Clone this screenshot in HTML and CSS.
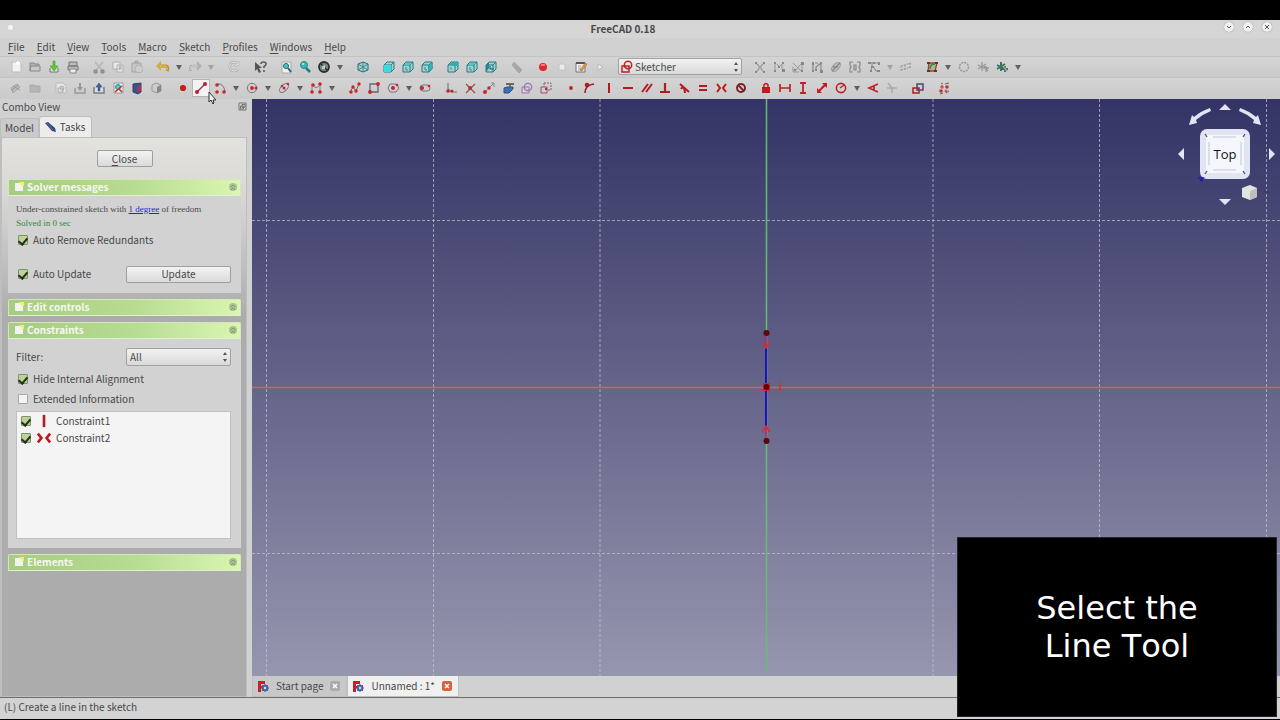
FILE: index.html
```html
<!DOCTYPE html>
<html lang="en">
<head>
<meta charset="utf-8">
<title>FreeCAD 0.18</title>
<link rel="stylesheet" href="styles.css">
</head>
<body>
<svg class="defs" aria-hidden="true">
  <defs>
    <symbol id="drop" viewBox="0 0 10 16"><path d="M2 6h6L5 11z" fill="#606060"/></symbol>
    <symbol id="new" viewBox="0 0 16 16"><path d="M4 3h7l2 2v8H4z" fill="#f2f2f2" stroke="#c0c0c0"/><path d="M10 2v4M8 4h4" stroke="#fff" stroke-width="2"/></symbol>
    <symbol id="open" viewBox="0 0 16 16"><path d="M3 12V4h4l1 1h4v2" fill="#b2b2b2" stroke="#888"/><path d="M3 12l1-5h9v5z" fill="#c8c8c8" stroke="#888"/></symbol>
    <symbol id="save" viewBox="0 0 16 16"><path d="M4 9v4h8V9" fill="#ddd" stroke="#777"/><path d="M7 2h2v5h3l-4 5-4-5h3z" fill="#62c832" stroke="#419d1c" stroke-width=".6"/></symbol>
    <symbol id="print" viewBox="0 0 16 16"><path d="M4 3h8v4H4zM3 7h10v4H3z" fill="#bbb" stroke="#777"/><path d="M5 10h6v4H5z" fill="#eee" stroke="#888"/></symbol>
    <symbol id="cut" viewBox="0 0 16 16"><path d="M4 3l7 8M12 3l-7 8" stroke="#b5b5b5" stroke-width="1.400"/><path d="M3 11h3v3H3zM10 11h3v3h-3z" fill="#999" stroke="#888"/></symbol>
    <symbol id="copy" viewBox="0 0 16 16"><path d="M3 3h7v7H3zM7 6h6v7H7z" fill="#e9e9e9" stroke="#b0b0b0"/><path d="M9 8h3M9 10h3" stroke="#aaa"/></symbol>
    <symbol id="paste" viewBox="0 0 16 16"><path d="M3 4h9v9H3zM6 2h3v2H6z" fill="#c5c5c5" stroke="#a5a5a5"/><path d="M7 7h6v6H7z" fill="#eee" stroke="#aaa"/><path d="M8 9h4M8 11h4" stroke="#aaa"/></symbol>
    <symbol id="undo" viewBox="0 0 16 16"><path d="M5 7h6q3 1 1 5" fill="none" stroke="#b99324" stroke-width="3"/><path d="M6 2v10L1 7z" fill="#d5ac38"/><path d="M5 7h6q2 1 1 4" fill="none" stroke="#ecc861"/></symbol>
    <symbol id="redo" viewBox="0 0 16 16"><path d="M11 7H5q-3 1-1 5" fill="none" stroke="#aaa" stroke-width="2.400"/><path d="M10 2v10l5-5z" fill="#b0b0b0"/><path d="M11 7H5q-2 1-1 4" fill="none" stroke="#ddd"/></symbol>
    <symbol id="refresh" viewBox="0 0 16 16"><path d="M12 10a4.500 4.500 0 1 1-1-6" fill="none" stroke="#aaa" stroke-width="2.500"/><path d="M12 10a4.500 4.500 0 1 1-1-6" fill="none" stroke="#eee"/><path d="M13 2v5H8z" fill="#ddd" stroke="#aaa" stroke-width=".5"/></symbol>
    <symbol id="whats" viewBox="0 0 16 16"><path d="M3 3v9l2-2 2 4 2-1-2-4h3z" fill="#555"/><path d="M9 5q0-2 2.500-2T14 5q0 1.500-2 2.500V9M12 11v2" fill="none" stroke="#5b5e68" stroke-width="1.700"/></symbol>
    <symbol id="fit" viewBox="0 0 16 16"><path d="M4 3h9v11H4z" fill="#f0f0f0" stroke="#aaa"/><circle cx="8" cy="7" r="2.500" fill="#4cc6c4" stroke="#1a6d70"/><path d="M10 9l3 4" stroke="#1a6d70" stroke-width="2"/></symbol>
    <symbol id="fitsel" viewBox="0 0 16 16"><circle cx="7" cy="6" r="3.500" fill="#35b9b6" stroke="#27888a"/><path d="M9 9l4 4" stroke="#198181" stroke-width="2.500"/><circle cx="6" cy="5" r="1" fill="#c6eeee"/></symbol>
    <symbol id="style" viewBox="0 0 16 16"><circle cx="8" cy="8" r="5" fill="#7a8585" stroke="#2e2e31" stroke-width="1.800"/><path d="M4 4l8 8" stroke="#303033" stroke-width="1.500"/><path d="M6 7l3-1v4H6z" fill="#bccccc"/></symbol>
    <symbol id="axo" viewBox="0 0 16 16"><path d="M8 3l5 2v6l-5 2-5-2V5z" fill="#a5cfcf" stroke="#256f74"/><path d="M8 3v10M3 5l10 6M13 5L3 11" fill="none" stroke="#398489" stroke-width=".9"/></symbol>
    <symbol id="box" viewBox="0 0 16 16"><path d="M3 6l3-3h7v7l-3 3H3z" fill="#a9cfcf" stroke="#267b80"/><path d="M3 6h7v7M10 6l3-3" fill="none" stroke="#267b80"/></symbol>
    <symbol id="v1" viewBox="0 0 16 16"><use href="#box"/><path d="M3 6h7v7H3z" fill="#35dede"/></symbol>
    <symbol id="v2" viewBox="0 0 16 16"><use href="#box"/><path d="M5 5l1-1h6l-2 2H5z" fill="#29d5d5"/><path d="M6 8v3h2" fill="none" stroke="#358d91"/></symbol>
    <symbol id="v3" viewBox="0 0 16 16"><use href="#box"/><path d="M10 6l3-3v7l-3 3z" fill="#25c5c5" stroke="#267b80" stroke-width=".5"/><path d="M6 8v3h2" fill="none" stroke="#358d91"/></symbol>
    <symbol id="v4" viewBox="0 0 16 16"><use href="#box"/><path d="M5 5l2-2h6v5l-3-2H5z" fill="#20b2b5"/><path d="M6 8v3" stroke="#358d91"/></symbol>
    <symbol id="v6" viewBox="0 0 16 16"><use href="#box"/><path d="M3 6l3-3v6l-3 4z" fill="#18898e"/><path d="M7 7v3h4" fill="none" stroke="#135f65"/></symbol>
    <symbol id="measure" viewBox="0 0 16 16"><path d="M5 3l8 8-3 3-7-8z" fill="#a8a8a8" stroke="#999" stroke-width=".6"/></symbol>
    <symbol id="rec" viewBox="0 0 16 16"><circle cx="8" cy="8" r="4" fill="#e52626"/><ellipse cx="8" cy="6" rx="2.500" ry="1" fill="#f58a8a"/></symbol>
    <symbol id="stop" viewBox="0 0 16 16"><path d="M5 5h6v6H5z" fill="#ececec" stroke="#c2c2c2"/></symbol>
    <symbol id="edit" viewBox="0 0 16 16"><path d="M3 4h9v9H3z" fill="#eee" stroke="#777"/><path d="M3 4h9" stroke="#555" stroke-width="2"/><path d="M5 7h3M5 9h3M5 11h5" stroke="#aaa"/><path d="M7 11l5-7 2 1-5 7z" fill="#e69b38" stroke="#89643b" stroke-width=".5"/></symbol>
    <symbol id="play" viewBox="0 0 16 16"><path d="M6 5l5 3-5 3z" fill="#eee" stroke="#bbb"/></symbol>
    <symbol id="sketcher" viewBox="0 0 16 16"><path d="M3 7h7v6H3z" fill="none" stroke="#c32128" stroke-width="1.500"/><circle cx="9" cy="6" r="3.700" fill="none" stroke="#c32128" stroke-width="1.500"/></symbol>
    <symbol id="g1" viewBox="0 0 16 16"><path d="M4 4l3 3v3l-3 3M12 4L9 7v3l3 3M7 8h2" fill="none" stroke="#999" stroke-width="1.200"/><path d="M3 3h2v2H3zM11 3h2v2h-2zM3 12h2v2H3zM11 12h2v2h-2z" fill="#888"/></symbol>
    <symbol id="g2" viewBox="0 0 16 16"><path d="M4 4v9M6 5l2 3 3-3v5" fill="none" stroke="#999"/><path d="M3 3h2v2H3zM7 7h2v2H7zM3 11h2v2H3zM11 10h3v3h-3zM11 3h2v2h-2z" fill="#888"/></symbol>
    <symbol id="g3" viewBox="0 0 16 16"><path d="M3 4l8 8M5 12l7-8v8M3 8v5h6" fill="none" stroke="#999"/><path d="M11 3h3v3h-3zM4 10h2v2H4zM11 11h2v2h-2z" fill="#888"/></symbol>
    <symbol id="g4" viewBox="0 0 16 16"><path d="M4 4v9M12 4v9M7 12V8l5-4M6 4h3" fill="none" stroke="#888" stroke-width="1.200"/><path d="M3 3h2v3H3zM11 3h2v2h-2zM3 11h2v2H3zM6 10h2v2H6zM11 11h3v3h-3z" fill="#888"/></symbol>
    <symbol id="g5" viewBox="0 0 16 16"><ellipse cx="8" cy="8" rx="5.500" ry="3" transform="rotate(-45 8 8)" fill="#c0c0c0" stroke="#999"/><path d="M4 12l8-8M5 8h5" stroke="#888" stroke-width="1.300"/></symbol>
    <symbol id="g6" viewBox="0 0 16 16"><path d="M6 3H3v3l1 2-1 2v3h3M10 3h3v3l-1 2 1 2v3h-3M7 6h2v5H7z" fill="none" stroke="#888" stroke-width="1.200"/></symbol>
    <symbol id="g7" viewBox="0 0 16 16"><path d="M3 4h10M6 4v4l-1 3M7 7l3 5h3" fill="none" stroke="#888"/><path d="M2 3h3v2H2zM7 3h2v2H7zM12 3h2v3h-2zM5 7h3v2H5zM4 11h2v2H4zM11 11h3v2h-3z" fill="#888"/></symbol>
    <symbol id="g8" viewBox="0 0 16 16"><path d="M3 7l10-3M3 11l10-3M3 7v5M7 6v5M12 4v5" stroke="#999" stroke-dasharray="2 1"/></symbol>
    <symbol id="bs" viewBox="0 0 16 16"><path d="M4 12l1-8h8l-2 8z" fill="#a8b894" stroke="#a63d26" stroke-width="1.300"/><path d="M6 10q0-5 5-5" stroke="#3b853b" fill="none" stroke-width="1.500"/><path d="M3 11h3v2H3zM3 3h3v2H3zM11 3h3v2h-3zM10 11h3v2h-3z" fill="#782b22"/></symbol>
    <symbol id="ring" viewBox="0 0 16 16"><circle cx="8" cy="8" r="4.500" fill="none" stroke="#999" stroke-width="1.500" stroke-dasharray="2 1"/></symbol>
    <symbol id="gearg" viewBox="0 0 16 16"><path d="M7 3v9M3 6l8 4M3 10l8-5M11 7v6M8 9h6M9 7l4 5" stroke="#999" stroke-width="1.300"/></symbol>
    <symbol id="gearc" viewBox="0 0 16 16"><path d="M3 6l8 4M11 7v6M8 10h6" stroke="#3c61a8" stroke-width="1.800"/><path d="M7 3v9M3 10l8-5" stroke="#367a45" stroke-width="2"/><path d="M10 8l3 4" stroke="#b7a944" stroke-width="1.500"/></symbol>
    <symbol id="leave" viewBox="0 0 16 16"><path d="M3 8l6-4 3 3-7 6z" fill="#bbb" stroke="#a5a5a5"/><path d="M5 6l7 4M4 10l6-5" stroke="#999"/></symbol>
    <symbol id="vsk" viewBox="0 0 16 16"><path d="M3 12V5h4l1 1h5v6z" fill="#b5b5b5" stroke="#aaa"/></symbol>
    <symbol id="nsk" viewBox="0 0 16 16"><path d="M3 3h7l3 3v7H3z" fill="#e6e6e6" stroke="#bbb"/><path d="M5 8h5v4H5z" fill="none" stroke="#aaa"/><circle cx="9" cy="8" r="2" fill="none" stroke="#aaa"/></symbol>
    <symbol id="down" viewBox="0 0 16 16"><path d="M4 9H3v4h10V9h-1" fill="none" stroke="#999" stroke-width="1.500"/><path d="M7 3h2v4h2l-3 4-3-4h2z" fill="#999"/></symbol>
    <symbol id="up" viewBox="0 0 16 16"><path d="M4 8H3v5h10V8h-1" fill="#ddd" stroke="#797b88" stroke-width="1.500"/><path d="M7 11h2V7h2L8 3 5 7h2z" fill="#3e63a0" stroke="#304b7c" stroke-width=".5"/></symbol>
    <symbol id="map" viewBox="0 0 16 16"><path d="M4 3h9v10H4z" fill="#eee" stroke="#999"/><circle cx="8" cy="7" r="2.500" fill="#58c9cd" stroke="#268f94"/><path d="M5 12l7-6M9 9l3 3" stroke="#c2312b" stroke-width="1.500"/></symbol>
    <symbol id="cubeb" viewBox="0 0 16 16"><path d="M4 4l8-1v9l-3 2-5-2z" fill="#335395" stroke="#3a3d65"/><path d="M8 6l4-1v6l-4 1z" fill="#a5374a"/></symbol>
    <symbol id="cubeg" viewBox="0 0 16 16"><path d="M4 5l4-2 5 2v6l-4 2-5-2z" fill="#ccc" stroke="#999"/><path d="M9 7l4-2v6l-4 2z" fill="#888"/></symbol>
    <symbol id="dot" viewBox="0 0 16 16"><circle cx="9" cy="8" r="3.100" fill="#c81c1c"/></symbol>
    <symbol id="line" viewBox="0 0 16 16"><path d="M4 12l8-8" stroke="#993c4a" stroke-width="1.500"/><circle cx="4" cy="12" r="2" fill="#c51d28"/><circle cx="12" cy="4" r="2" fill="#c51d28"/></symbol>
    <symbol id="arc" viewBox="0 0 16 16"><path d="M5 4q7-1 8 8" fill="none" stroke="#777083"/><circle cx="5" cy="5" r="1.800" fill="#c72626"/><circle cx="5" cy="12" r="1.800" fill="#c72626"/><circle cx="12" cy="12" r="1.800" fill="#c72626"/></symbol>
    <symbol id="circle" viewBox="0 0 16 16"><circle cx="8" cy="8" r="4.700" fill="none" stroke="#777287"/><circle cx="8" cy="8" r="1.900" fill="#c72626"/><circle cx="12" cy="8" r="1.500" fill="#c72626"/></symbol>
    <symbol id="conic" viewBox="0 0 16 16"><ellipse cx="8" cy="8" rx="5.500" ry="3" transform="rotate(-45 8 8)" fill="none" stroke="#77738b"/><circle cx="8" cy="8" r="1.500" fill="#c72626"/><circle cx="12" cy="4" r="1.200" fill="#c72626"/><circle cx="6" cy="6" r="1.200" fill="#c72626"/></symbol>
    <symbol id="spline" viewBox="0 0 16 16"><path d="M4 12V5q4 5 8 0v7" fill="none" stroke="#8c7a89"/><circle cx="4" cy="12" r="1.800" fill="#c72626"/><circle cx="5" cy="5" r="1.800" fill="#c72626"/><circle cx="12" cy="4" r="1.800" fill="#c72626"/><circle cx="12" cy="12" r="1.800" fill="#c72626"/></symbol>
    <symbol id="poly" viewBox="0 0 16 16"><path d="M3 12l3-5 3 4 3-7" fill="none" stroke="#8c5a69"/><circle cx="4" cy="12" r="1.700" fill="#c72626"/><circle cx="6" cy="7" r="1.700" fill="#c72626"/><circle cx="9" cy="11" r="1.700" fill="#c72626"/><circle cx="12" cy="4" r="1.700" fill="#c72626"/></symbol>
    <symbol id="rect" viewBox="0 0 16 16"><path d="M4 4h8v8H4z" fill="none" stroke="#667" stroke-width="1.300"/><circle cx="12" cy="4" r="1.900" fill="#c72626"/><circle cx="4" cy="12" r="1.900" fill="#c72626"/></symbol>
    <symbol id="hex" viewBox="0 0 16 16"><path d="M5 4h6l3 4-3 4H5L3 8z" fill="none" stroke="#777287"/><circle cx="8" cy="8" r="2" fill="#c72626"/><circle cx="12" cy="5" r="1.300" fill="#c72626"/></symbol>
    <symbol id="slot" viewBox="0 0 16 16"><rect x="3" y="5" width="10" height="6" rx="3" fill="none" stroke="#777287"/><circle cx="5" cy="8" r="2" fill="#c72626"/><circle cx="12" cy="6" r="1.300" fill="#c72626"/></symbol>
    <symbol id="fillet" viewBox="0 0 16 16"><path d="M5 3v6l3 3h6" fill="none" stroke="#777" stroke-width="1.200"/><circle cx="5" cy="11" r="1.800" fill="#c72626"/><circle cx="9" cy="11" r="1.500" fill="#c72626"/></symbol>
    <symbol id="trim" viewBox="0 0 16 16"><path d="M4 4l9 9M13 4l-9 9" stroke="#83545a" stroke-width="1.200"/><circle cx="8" cy="8" r="1.900" fill="#c72626"/></symbol>
    <symbol id="extend" viewBox="0 0 16 16"><path d="M4 12l4-4M9 7l4-4M10 3h3v4" fill="none" stroke="#888"/><circle cx="4" cy="12" r="2" fill="#c72626"/><circle cx="8" cy="8" r="1.700" fill="#c72626"/></symbol>
    <symbol id="ext" viewBox="0 0 16 16"><path d="M4 8l3-1h6v2l-4 4H4z" fill="#3a6fb2" stroke="#31527f"/><path d="M6 4h8M10 4v3" stroke="#666" stroke-width="1.800"/></symbol>
    <symbol id="carbon" viewBox="0 0 16 16"><path d="M3 7h7v6H3z" fill="#d5c7dc" stroke="#9b75ad"/><circle cx="9" cy="7" r="3.700" fill="none" stroke="#9b75ad" stroke-width="1.300"/></symbol>
    <symbol id="constr" viewBox="0 0 16 16"><path d="M3 7h6v6H3z" fill="none" stroke="#a64769"/><path d="M6 3h7v7H9M6 3v4" fill="none" stroke="#6c6588" stroke-dasharray="2 1"/><path d="M7 9h2" stroke="#a33" stroke-width="2"/></symbol>
    <symbol id="coin" viewBox="0 0 16 16"><circle cx="9" cy="8" r="1.900" fill="#c11e22"/></symbol>
    <symbol id="onobj" viewBox="0 0 16 16"><path d="M4 13q0-8 9-9" fill="none" stroke="#a51b20" stroke-width="1.600"/><circle cx="6" cy="5" r="2.300" fill="#b51b20"/></symbol>
    <symbol id="vert" viewBox="0 0 16 16"><path d="M9 3v10" stroke="#b31b20" stroke-width="2"/></symbol>
    <symbol id="horiz" viewBox="0 0 16 16"><path d="M4 8h10" stroke="#b31b20" stroke-width="2"/></symbol>
    <symbol id="par" viewBox="0 0 16 16"><path d="M4 12l6-8M8 12l6-8" stroke="#b31b20" stroke-width="2"/></symbol>
    <symbol id="perp" viewBox="0 0 16 16"><path d="M8 3v9M3 12h10" stroke="#b31b20" stroke-width="2.200"/></symbol>
    <symbol id="tan" viewBox="0 0 16 16"><path d="M4 4l9 8M5 9q3-5 4 4" fill="none" stroke="#b31b20" stroke-width="2"/></symbol>
    <symbol id="equal" viewBox="0 0 16 16"><path d="M4 6h8M4 10h8" stroke="#b31b20" stroke-width="2"/></symbol>
    <symbol id="sym" viewBox="0 0 16 16"><path d="M3 4l3 4-3 4M12 4L9 8l3 4" fill="none" stroke="#c0151b" stroke-width="2"/></symbol>
    <symbol id="block" viewBox="0 0 16 16"><circle cx="8" cy="8" r="4" fill="none" stroke="#782025" stroke-width="1.900"/><path d="M5 5l6 6" stroke="#782025" stroke-width="1.800"/></symbol>
    <symbol id="lock" viewBox="0 0 16 16"><path d="M5 7h8v6H5z" fill="#c61920"/><path d="M7 8V5q2-3 4 0v3" fill="none" stroke="#b71920" stroke-width="1.500"/></symbol>
    <symbol id="hd" viewBox="0 0 16 16"><path d="M4 4v8M14 4v8M4 8h10" stroke="#bd2328" stroke-width="1.700"/></symbol>
    <symbol id="vd" viewBox="0 0 16 16"><path d="M5 3h6M5 13h6M8 3v10" stroke="#bd2328" stroke-width="1.800"/></symbol>
    <symbol id="dist" viewBox="0 0 16 16"><path d="M4 12l8-8" stroke="#c31b20" stroke-width="2.200"/><path d="M3 8v5h5zM13 8V3H8z" fill="#c31b20"/></symbol>
    <symbol id="rad" viewBox="0 0 16 16"><circle cx="8" cy="8" r="4.600" fill="none" stroke="#b9252a" stroke-width="1.600"/><path d="M7 8l4-3" stroke="#b9252a" stroke-width="1.500"/></symbol>
    <symbol id="ang" viewBox="0 0 16 16"><path d="M13 4L4 8l9 4M9 6v4" fill="none" stroke="#bd2328" stroke-width="1.700"/></symbol>
    <symbol id="snell" viewBox="0 0 16 16"><path d="M3 8h10M8 8v5M4 3l4 5" stroke="#aaa" stroke-width="1.500"/></symbol>
    <symbol id="toggle" viewBox="0 0 16 16"><path d="M3 8h6v5H3z" fill="none" stroke="#b51b20" stroke-width="1.500"/><path d="M7 4h6v6H7z" fill="none" stroke="#434b70" stroke-width="1.500"/></symbol>
    <symbol id="swap" viewBox="0 0 16 16"><circle cx="6" cy="7" r="1.800" fill="#d84f51"/><circle cx="11" cy="7" r="1.800" fill="#c0343a"/><circle cx="5" cy="11" r="1.800" fill="#c0343a"/><circle cx="10" cy="11" r="1.500" fill="#d84f51"/><path d="M9 4l4-1M5 4l2-1M10 13l3-2M4 14l3-1" stroke="#666"/></symbol>
    <symbol id="page" viewBox="0 0 12 12"><path d="M2 2h8v8H2z" fill="#f2f2ee"/><path d="M6 1h5v4H9z" fill="#f4ef6a"/></symbol>
    <symbol id="collapse" viewBox="0 0 12 12"><circle cx="6" cy="6" r="4" fill="#a9bf93"/><path d="M4 6l2-2 2 2M4 9l2-2 2 2" fill="none" stroke="#859a72"/></symbol>
    <symbol id="spin" viewBox="0 0 8 12"><path d="M4 1l2 3H2zM4 11l2-3H2z" fill="#555"/></symbol>
    <symbol id="fc" viewBox="0 0 12 12"><path d="M1 1h7v3H4v2h2v2H4v4H1z" fill="#c32027"/><circle cx="8" cy="8" r="2.300" fill="none" stroke="#41649f" stroke-width="2"/><path d="M8 4v8M4 8h8M5 5l6 6M11 5l-6 6" stroke="#41649f"/><circle cx="8" cy="8" r="1.200" fill="#ddd"/></symbol>
    <symbol id="x" viewBox="0 0 10 10"><path d="M3 3l4 4M7 3L3 7" stroke="#fff" stroke-width="1.500"/></symbol>
  </defs>
</svg>
<div class="screen">
  <header class="titlebar">
    <span class="title-dot"></span>
    <h1 class="title">FreeCAD 0.18</h1>
    <div class="winbtns">
      <button class="winbtn" aria-label="Minimize"><svg viewBox="0 0 10 10"><path d="M3 4l2 2 2-2"/></svg></button>
      <button class="winbtn" aria-label="Maximize"><svg viewBox="0 0 10 10"><path d="M3 6l2-2 2 2"/></svg></button>
      <button class="winbtn" aria-label="Close window"><svg viewBox="0 0 10 10"><path d="M3 3l4 4M7 3L3 7"/></svg></button>
    </div>
  </header>
  <nav class="menubar" aria-label="Menu">
    <button><u>F</u>ile</button><button><u>E</u>dit</button><button><u>V</u>iew</button><button><u>T</u>ools</button><button><u>M</u>acro</button><button><u>S</u>ketch</button><button><u>P</u>rofiles</button><button><u>W</u>indows</button><button><u>H</u>elp</button>
  </nav>
  <div class="toolbar" role="toolbar" aria-label="Standard">
    <button class="tb" aria-label="New"><svg><use href="#new"/></svg></button>
    <button class="tb" aria-label="Open"><svg><use href="#open"/></svg></button>
    <button class="tb" aria-label="Save"><svg><use href="#save"/></svg></button>
    <button class="tb" aria-label="Print"><svg><use href="#print"/></svg></button>
    <span class="sep"></span>
    <button class="tb" aria-label="Cut"><svg><use href="#cut"/></svg></button>
    <button class="tb" aria-label="Copy"><svg><use href="#copy"/></svg></button>
    <button class="tb" aria-label="Paste"><svg><use href="#paste"/></svg></button>
    <span class="sep"></span>
    <button class="tb" aria-label="Undo"><svg><use href="#undo"/></svg></button>
    <button class="tb drop" aria-label="Undo list"><svg><use href="#drop"/></svg></button>
    <button class="tb" aria-label="Redo"><svg><use href="#redo"/></svg></button>
    <button class="tb drop dim" aria-label="Redo list"><svg><use href="#drop"/></svg></button>
    <span class="sep"></span>
    <button class="tb" aria-label="Refresh"><svg><use href="#refresh"/></svg></button>
    <span class="sep"></span>
    <button class="tb" aria-label="What's this"><svg><use href="#whats"/></svg></button>
    <span class="sep"></span>
    <button class="tb" aria-label="Fit all"><svg><use href="#fit"/></svg></button>
    <button class="tb" aria-label="Fit selection"><svg><use href="#fitsel"/></svg></button>
    <button class="tb" aria-label="Draw style"><svg><use href="#style"/></svg></button>
    <button class="tb drop" aria-label="Draw styles"><svg><use href="#drop"/></svg></button>
    <span class="sep"></span>
    <button class="tb" aria-label="Axonometric"><svg><use href="#axo"/></svg></button>
    <span class="sep"></span>
    <button class="tb" aria-label="Front"><svg><use href="#v1"/></svg></button>
    <button class="tb" aria-label="Top"><svg><use href="#v2"/></svg></button>
    <button class="tb" aria-label="Right"><svg><use href="#v3"/></svg></button>
    <span class="sep"></span>
    <button class="tb" aria-label="Rear"><svg><use href="#v4"/></svg></button>
    <button class="tb" aria-label="Bottom"><svg><use href="#v2"/></svg></button>
    <button class="tb" aria-label="Left"><svg><use href="#v6"/></svg></button>
    <span class="sep"></span>
    <button class="tb" aria-label="Measure"><svg><use href="#measure"/></svg></button>
    <span class="sep"></span>
    <button class="tb" aria-label="Record macro"><svg><use href="#rec"/></svg></button>
    <button class="tb" aria-label="Stop macro"><svg><use href="#stop"/></svg></button>
    <button class="tb" aria-label="Macros"><svg><use href="#edit"/></svg></button>
    <button class="tb" aria-label="Run macro"><svg><use href="#play"/></svg></button>
    <span class="sep"></span>
    <div class="combo workbench">
      <svg class="combo-icon"><use href="#sketcher"/></svg>
      <select aria-label="Workbench"><option>Sketcher</option></select>
      <svg class="spin"><use href="#spin"/></svg>
    </div>
    <span class="sep"></span>
    <button class="tb" aria-label="Close shape"><svg><use href="#g1"/></svg></button>
    <button class="tb" aria-label="Connect edges"><svg><use href="#g2"/></svg></button>
    <button class="tb" aria-label="Select constraints"><svg><use href="#g3"/></svg></button>
    <button class="tb" aria-label="Select elements"><svg><use href="#g4"/></svg></button>
    <button class="tb" aria-label="Internal geometry"><svg><use href="#g5"/></svg></button>
    <button class="tb" aria-label="Symmetry"><svg><use href="#g6"/></svg></button>
    <button class="tb" aria-label="Clone"><svg><use href="#g7"/></svg></button>
    <button class="tb drop dim" aria-label="Clone options"><svg><use href="#drop"/></svg></button>
    <button class="tb" aria-label="Rectangular array"><svg><use href="#g8"/></svg></button>
    <span class="sep"></span>
    <button class="tb" aria-label="B-spline degree"><svg><use href="#bs"/></svg></button>
    <button class="tb drop" aria-label="B-spline options"><svg><use href="#drop"/></svg></button>
    <button class="tb" aria-label="Convert to NURBS"><svg><use href="#ring"/></svg></button>
    <button class="tb" aria-label="Increase degree"><svg><use href="#gearg"/></svg></button>
    <button class="tb" aria-label="Knot multiplicity"><svg><use href="#gearc"/></svg></button>
    <button class="tb drop" aria-label="Knot options"><svg><use href="#drop"/></svg></button>
  </div>
  <div class="toolbar" role="toolbar" aria-label="Sketcher">
    <button class="tb" aria-label="Leave sketch"><svg><use href="#leave"/></svg></button>
    <button class="tb" aria-label="View sketch"><svg><use href="#vsk"/></svg></button>
    <span class="sep"></span>
    <button class="tb" aria-label="New sketch"><svg><use href="#nsk"/></svg></button>
    <button class="tb" aria-label="Edit sketch"><svg><use href="#down"/></svg></button>
    <button class="tb" aria-label="Leave"><svg><use href="#up"/></svg></button>
    <button class="tb" aria-label="View"><svg><use href="#map"/></svg></button>
    <button class="tb" aria-label="View section"><svg><use href="#cubeb"/></svg></button>
    <button class="tb" aria-label="Map sketch"><svg><use href="#cubeg"/></svg></button>
    <span class="sep"></span>
    <button class="tb" aria-label="Point"><svg><use href="#dot"/></svg></button>
    <button class="tb active" aria-label="Line"><svg><use href="#line"/></svg></button>
    <button class="tb" aria-label="Arc"><svg><use href="#arc"/></svg></button>
    <button class="tb drop" aria-label="Arcs"><svg><use href="#drop"/></svg></button>
    <button class="tb" aria-label="Circle"><svg><use href="#circle"/></svg></button>
    <button class="tb drop" aria-label="Circles"><svg><use href="#drop"/></svg></button>
    <button class="tb" aria-label="Conic"><svg><use href="#conic"/></svg></button>
    <button class="tb drop" aria-label="Conics"><svg><use href="#drop"/></svg></button>
    <button class="tb" aria-label="B-spline"><svg><use href="#spline"/></svg></button>
    <button class="tb drop" aria-label="B-splines"><svg><use href="#drop"/></svg></button>
    <span class="sep"></span>
    <button class="tb" aria-label="Polyline"><svg><use href="#poly"/></svg></button>
    <button class="tb" aria-label="Rectangle"><svg><use href="#rect"/></svg></button>
    <button class="tb" aria-label="Polygon"><svg><use href="#hex"/></svg></button>
    <button class="tb drop" aria-label="Polygons"><svg><use href="#drop"/></svg></button>
    <button class="tb" aria-label="Slot"><svg><use href="#slot"/></svg></button>
    <span class="sep"></span>
    <button class="tb" aria-label="Fillet"><svg><use href="#fillet"/></svg></button>
    <button class="tb" aria-label="Trim"><svg><use href="#trim"/></svg></button>
    <button class="tb" aria-label="Extend"><svg><use href="#extend"/></svg></button>
    <button class="tb" aria-label="External geometry"><svg><use href="#ext"/></svg></button>
    <button class="tb" aria-label="Carbon copy"><svg><use href="#carbon"/></svg></button>
    <button class="tb" aria-label="Construction mode"><svg><use href="#constr"/></svg></button>
    <span class="sep narrow"></span>
    <button class="tb" aria-label="Coincident"><svg><use href="#coin"/></svg></button>
    <button class="tb" aria-label="Point on object"><svg><use href="#onobj"/></svg></button>
    <button class="tb" aria-label="Vertical"><svg><use href="#vert"/></svg></button>
    <button class="tb" aria-label="Horizontal"><svg><use href="#horiz"/></svg></button>
    <button class="tb" aria-label="Parallel"><svg><use href="#par"/></svg></button>
    <button class="tb" aria-label="Perpendicular"><svg><use href="#perp"/></svg></button>
    <button class="tb" aria-label="Tangent"><svg><use href="#tan"/></svg></button>
    <button class="tb" aria-label="Equal"><svg><use href="#equal"/></svg></button>
    <button class="tb" aria-label="Symmetric"><svg><use href="#sym"/></svg></button>
    <button class="tb" aria-label="Block"><svg><use href="#block"/></svg></button>
    <span class="sep narrow"></span>
    <button class="tb" aria-label="Lock"><svg><use href="#lock"/></svg></button>
    <button class="tb" aria-label="Horizontal distance"><svg><use href="#hd"/></svg></button>
    <button class="tb" aria-label="Vertical distance"><svg><use href="#vd"/></svg></button>
    <button class="tb" aria-label="Distance"><svg><use href="#dist"/></svg></button>
    <button class="tb" aria-label="Radius"><svg><use href="#rad"/></svg></button>
    <button class="tb drop" aria-label="Radius options"><svg><use href="#drop"/></svg></button>
    <button class="tb" aria-label="Angle"><svg><use href="#ang"/></svg></button>
    <button class="tb" aria-label="Refraction"><svg><use href="#snell"/></svg></button>
    <span class="sep"></span>
    <button class="tb" aria-label="Toggle reference"><svg><use href="#toggle"/></svg></button>
    <span class="sep"></span>
    <button class="tb" aria-label="Virtual space"><svg><use href="#swap"/></svg></button>
  </div>
  <main class="work">
    <aside class="dock">
      <div class="dock-head">
        <h2>Combo View</h2>
        <button class="float" aria-label="Float panel"><svg viewBox="0 0 9 9"><path d="M1 1h7v7H1zM4 2.500h3v3H4zM2.500 4h3v3h-3z"/></svg></button>
      </div>
      <div class="tabs">
        <button class="tab">Model</button>
        <button class="tab current"><svg viewBox="0 0 12 12"><path d="M1 2l3-1 7 6 1 4-4-1z" fill="#2c4a7c"/><path d="M3 2l6 7" stroke="#58749f"/></svg>Tasks</button>
      </div>
      <div class="tasks">
        <button class="btn close"><u>C</u>lose</button>
        <section class="box">
          <h3 class="box-head"><svg><use href="#page"/></svg><span>Solver messages</span><svg><use href="#collapse"/></svg></h3>
          <div class="box-body solver">
            <p class="msg">Under-constrained sketch with <a href="#degree">1 degree</a> of freedom</p>
            <p class="msg ok">Solved in 0 sec</p>
            <label class="check first"><input type="checkbox" checked>Auto Remove Redundants</label>
            <div class="row update">
              <label class="check"><input type="checkbox" checked>Auto Update</label>
              <button class="btn field">Update</button>
            </div>
          </div>
        </section>
        <section class="box">
          <h3 class="box-head"><svg><use href="#page"/></svg><span>Edit controls</span><svg><use href="#collapse"/></svg></h3>
        </section>
        <section class="box">
          <h3 class="box-head"><svg><use href="#page"/></svg><span>Constraints</span><svg><use href="#collapse"/></svg></h3>
          <div class="box-body constraints">
            <div class="row">
              <label for="filter">Filter:</label>
              <div class="combo field">
                <select id="filter"><option>All</option></select>
                <svg class="spin"><use href="#spin"/></svg>
              </div>
            </div>
            <label class="check"><input type="checkbox" checked>Hide Internal Alignment</label>
            <label class="check"><input type="checkbox">Extended Information</label>
            <ul class="list">
              <li><label class="check"><input type="checkbox" checked><svg viewBox="0 0 16 16"><path d="M8 1v14" stroke="#b01c20" stroke-width="3"/></svg>Constraint1</label></li>
              <li><label class="check"><input type="checkbox" checked><svg viewBox="0 0 16 16"><path d="M1 3l4 5-4 5M15 3l-4 5 4 5" fill="none" stroke="#c0151b" stroke-width="3"/></svg>Constraint2</label></li>
            </ul>
          </div>
        </section>
        <section class="box">
          <h3 class="box-head"><svg><use href="#page"/></svg><span>Elements</span><svg><use href="#collapse"/></svg></h3>
        </section>
      </div>
    </aside>
    <section class="mdi">
      <div class="view">
        <svg class="scene" viewBox="252 99 1028 577" preserveAspectRatio="xMidYMid slice" role="img" aria-label="Sketch">
          <path class="grid" d="M266.500 99V676M433.500 99V676M600 99V676M933 99V676M1099.500 99V676M1266.500 99V676M252 220.500H1280M252 553.500H1280"/>
          <path d="M766.500 99V671" stroke="#68ba78" stroke-width="1.500"/>
          <path d="M252 387.500H1280" stroke="#d2606a" stroke-width="1.500"/>
          <path d="M766 347V427" stroke="#1a12c4" stroke-width="2"/>
          <path d="M766 333V347M766 427V441" stroke="#b01c78" stroke-width="1.500"/>
          <path d="M762 342l4 6 4-6M762 432l4-6 4 6M780 383v8" fill="none" stroke="#ee2222" stroke-width="1.400"/>
          <path d="M763 383h7v8h-7z" fill="#e02222"/>
          <g fill="#5a0808"><circle cx="766.500" cy="333" r="3"/><circle cx="766.500" cy="387" r="3"/><circle cx="766.500" cy="441" r="3"/></g>
        </svg>
        <svg class="cube" viewBox="0 0 110 110" role="img" aria-label="Navigation cube">
          <g fill="#e2e4f4">
            <path d="M55 5l6 6H49zM55 106l6-6H49zM8 55l6-6v12zM105 55l-6-6v12z"/>
            <path d="M40 9q-9 3-16 9l-2-2-3 10 8-2-1-3q7-6 15-9zM70 9q9 3 16 9l2-2 3 10-8-2 1-3q-7-6-15-9z"/>
          </g>
          <rect x="30" y="30" width="50" height="50" rx="7" fill="#e1e5f3"/>
          <rect x="36" y="36" width="38" height="38" rx="2" fill="#f6f7fd"/>
          <path d="M43 38h23M43 71h23M39 43v23M71 43v23" stroke="#c2c7d7"/>
          <path d="M35 35l2 3M73 38l2-3M35 75l2-3M73 72l2 3" stroke="#555" stroke-width="1.300"/>
          <path d="M28 79h5l-3 3 3-1" fill="none" stroke="#2020b0" stroke-width="1.500"/>
          <path d="M72 89l8-3 7 3v9l-7 3-8-3z" fill="#e3e3df"/><path d="M80 92l7-3v9l-7 3z" fill="#bdbdbc"/>
          <path d="M94 91l6 3M94 93h6" stroke="#3a3a55"/>
          <text x="55" y="60" text-anchor="middle" class="cube-text">Top</text>
        </svg>
      </div>
      <div class="doc-tabs">
        <div class="doc"><svg class="doc-icon"><use href="#fc"/></svg><a href="#start">Start page</a><button class="doc-x" aria-label="Close start page"><svg><use href="#x"/></svg></button></div>
        <div class="doc current"><svg class="doc-icon"><use href="#fc"/></svg><a href="#unnamed">Unnamed : 1*</a><button class="doc-x" aria-label="Close document"><svg><use href="#x"/></svg></button></div>
      </div>
    </section>
  </main>
  <footer class="status">(L) Create a line in the sketch</footer>
  <div class="caption">Select the<br>Line Tool</div>
  <svg class="cursor" viewBox="0 0 9 14"><path d="M1 1v10l2-2 2 4 1-1-1-3h3z" fill="#eee" stroke="#333"/></svg>
</div>
</body>
</html>
```
FILE: styles.css
```css
* { box-sizing: border-box; }
body {
  margin: 0;
  background: #000;
  color: #484848;
  font: 10px/14px "Noto Sans CJK JP", "Noto Sans", sans-serif;
}
button, select, input { font: inherit; color: inherit; margin: 0; }
button { border: 0; padding: 0; background: none; }
h1, h2, h3, p, ul { margin: 0; padding: 0; font-size: inherit; font-weight: normal; }
ul { list-style: none; }
u { text-underline-offset: 2px; }
svg { display: block; }
.defs { position: absolute; width: 0; height: 0; }

.screen {
  position: relative;
  display: flex;
  flex-direction: column;
  min-height: 100vh;
  padding: 20px 0 1px;
}
.titlebar {
  display: grid;
  grid-template-columns: 60px 1fr 60px;
  align-items: center;
  height: 18px;
  padding: 0 8px;
  background: #d5d5d5;
}
.title-dot { width: 5px; height: 5px; margin-bottom: 4px; border-radius: 2px; background: #f4f4f4; }
.title { text-align: center; font-weight: bold; padding-right: 34px; }
.winbtns { display: flex; justify-content: flex-end; gap: 9px; padding-bottom: 4px; }
.winbtn { width: 10px; height: 10px; border-radius: 50%; background: #f0f0f0; box-shadow: 0 0 1px #777; }
.winbtn svg { width: 10px; height: 10px; fill: none; stroke: #555; stroke-width: 1; }
.menubar {
  display: flex;
  align-items: center;
  gap: 12px;
  height: 18px;
  padding: 0 8px 1px;
  background: #d1d1d1;
}
.toolbar {
  display: flex;
  align-items: center;
  gap: 3px;
  height: 21px;
  padding: 0 0 1px 8px;
  background: linear-gradient(#d4d4d4, #cacaca);
  border-top: 1px solid #c3c3c3;
}
.toolbar + .toolbar { height: 22px; padding-bottom: 2px; }
.tb { flex: none; width: 16px; height: 16px; }
.tb svg { width: 100%; height: 100%; }
.tb.drop { width: 10px; }
.tb.dim { opacity: .4; }
.tb.active { background: #f3f3f3; outline: 1px solid #b5b5b5; }
.sep { flex: none; width: 4px; }
.sep.narrow { width: 2px; }

.combo {
  display: flex;
  align-items: center;
  height: 18px;
  border: 1px solid #a2a2a2;
  border-radius: 2px;
  background: linear-gradient(#f2f2f2, #d9d9d9);
}
.combo select { flex: 1; appearance: none; border: 0; background: none; height: 14px; padding: 0 3px; line-height: 14px; }
.workbench { width: 124px; height: 17px; }
.combo-icon { width: 16px; height: 16px; }
.workbench select { padding: 0; }
.spin { width: 8px; height: 12px; margin-right: 1px; }

.work { flex: 1; display: flex; background: #d1d1d1; border-bottom: 1px solid #6c6c6c; }
.dock { flex: none; width: 252px; display: flex; flex-direction: column; padding-right: 5px; }
.dock-head { display: flex; align-items: center; justify-content: space-between; height: 17px; padding: 0 0 2px 2px; }
.float svg { width: 9px; height: 9px; fill: none; stroke: #777; stroke-width: 1; }
.tabs { display: flex; align-items: flex-end; height: 21px; }
.tab {
  display: flex;
  align-items: center;
  gap: 4px;
  height: 19px;
  padding: 0 4px 1px;
  border: 1px solid #bdbdbd;
  border-bottom: 0;
  border-radius: 3px 3px 0 0;
  background: #cbcbcb;
}
.tab svg { width: 12px; height: 12px; }
.tab.current { height: 21px; padding: 0 6px 1px 4px; background: #ececec; }
.tasks {
  flex: 1;
  display: flex;
  flex-direction: column;
  gap: 6px;
  padding: 12px 5px 0 6px;
  border: 1px solid #bebebe;
  border-left-width: 2px;
  background: linear-gradient(#e4e2de, #d8d7d4 60px, #acacac 180px);
}
.btn {
  height: 17px;
  border: 1px solid #9f9f9f;
  border-radius: 2px;
  background: linear-gradient(#f3f3f3, #dadada);
  line-height: 14px;
}
.close { align-self: center; width: 56px; margin-bottom: 6px; }
.box-head {
  display: flex;
  align-items: center;
  gap: 2px;
  height: 17px;
  padding: 0 1px 1px 4px;
  border: 1px solid #d3e8b9;
  border-bottom-color: #e0f0cc;
  border-radius: 2px 2px 0 0;
  background: linear-gradient(90deg, #a8cb82, #b8dc92 55%, #daf6b2);
  color: #f5f9ef;
  font-weight: bold;
}
.box-head svg { width: 12px; height: 12px; }
.box-head span { flex: 1; }
.box-body { padding: 6px 10px 10px 8px; background: #d2d2d2; }
.msg { font: 9px/14px "Liberation Serif", serif; }
.msg a { color: #2626c8; }
.msg.ok { color: #2d8a35; }
.check { display: flex; align-items: center; height: 18px; }
.check input {
  appearance: none;
  flex: none;
  display: grid;
  place-items: center;
  width: 10px;
  height: 10px;
  margin: 0 5px 0 2px;
  border: 1px solid #a5a5a5;
  border-radius: 1px;
  background: #f3f3f3;
}
.check input:checked { background: #b9d39b; border-color: #7d9267; }
.check input:checked::before {
  content: "";
  width: 4px;
  height: 7px;
  margin-bottom: 2px;
  border: solid #252f1c;
  border-width: 0 2px 2px 0;
  transform: rotate(40deg);
}
.row { display: flex; align-items: center; justify-content: space-between; height: 18px; }
.field { width: 105px; }
.solver .first { margin-top: 1px; }
.update { margin-top: 16px; }
.constraints { display: flex; flex-direction: column; gap: 2px; padding-top: 9px; padding-bottom: 9px; }
.constraints > .row { margin-bottom: 2px; }
.list { height: 128px; margin-top: 1px; background: #f4f4f4; border: 1px solid #c0c0c0; }
.list .check { height: 17px; padding-left: 2px; }
.list svg { width: 16px; height: 14px; margin-right: 4px; }

.mdi { flex: 1; min-width: 0; display: flex; flex-direction: column; }
.view { position: relative; flex: 1; overflow: hidden; background: linear-gradient(#333365, #9796af); }
.scene { position: absolute; width: 100%; height: 100%; }
.grid { fill: none; stroke: #c5c5d0; stroke-opacity: .7; stroke-dasharray: 3 2; }
.cube { position: absolute; top: 0; right: 0; width: 110px; height: 110px; }
.cube-text { font: 13px "Open Sans", sans-serif; fill: #111; }
.doc-tabs { display: flex; height: 21px; }
.doc { display: flex; align-items: center; gap: 7px; height: 21px; padding: 0 6px 1px 4px; background: #c8c8c8; border: 1px solid #c0c0c0; border-top: 0; }
.doc.current { background: #f0f0f0; }
.doc a { color: inherit; text-decoration: none; }
.doc-icon { width: 12px; height: 12px; }
.doc-x { width: 10px; height: 10px; border-radius: 2px; background: #aaa; }
.doc.current .doc-x { background: #d9603d; }
.doc-x svg { width: 10px; height: 10px; }
.status { height: 21px; padding: 2px 4px; background: #d3d3d3; }
.caption {
  position: absolute;
  right: 3px;
  bottom: 3px;
  display: flex;
  align-items: center;
  justify-content: center;
  width: 320px;
  height: 180px;
  border: 1px solid #222230;
  background: #000;
  color: #fff;
  text-align: center;
  font: 32px/38px "DejaVu Sans", sans-serif;
  font-kerning: none;
}
.cursor { position: absolute; left: 208px; top: 91px; width: 9px; height: 14px; }
```
